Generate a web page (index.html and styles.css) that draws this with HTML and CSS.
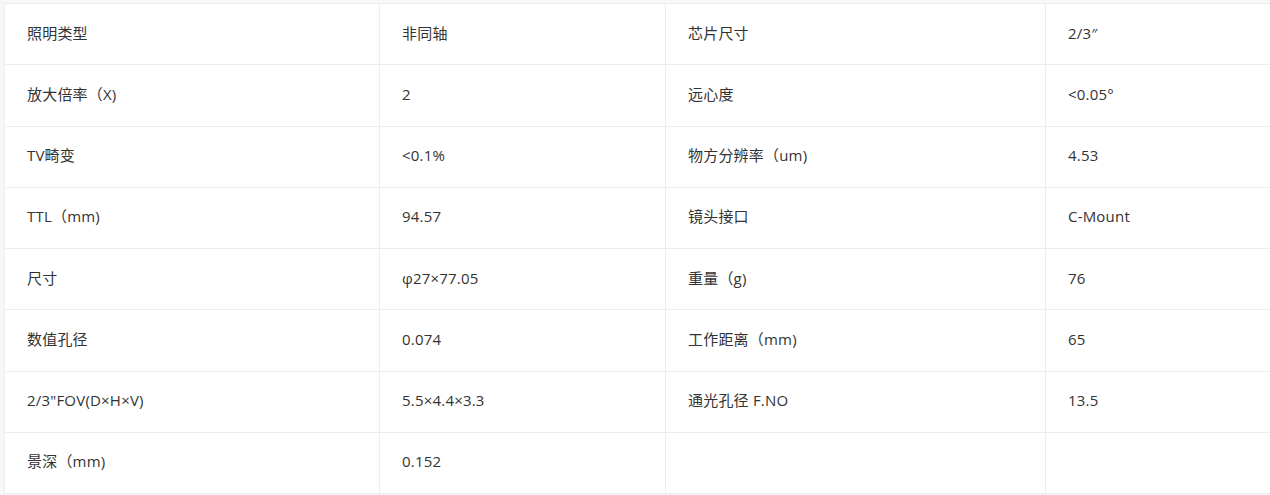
FILE: index.html
```html
<!DOCTYPE html>
<html lang="zh-CN">
<head>
<meta charset="utf-8">
<title>参数</title>
<link rel="stylesheet" href="styles.css">
</head>
<body>
<div class="wrap">
<table class="spec">
<colgroup>
<col class="c1"><col class="c2"><col class="c3"><col class="c4">
</colgroup>
<tbody>
<tr><td>照明类型</td><td>非同轴</td><td>芯片尺寸</td><td>2/3″</td></tr>
<tr><td>放大倍率（X)</td><td>2</td><td>远心度</td><td>&lt;0.05°</td></tr>
<tr><td>TV畸变</td><td>&lt;0.1%</td><td>物方分辨率（um)</td><td>4.53</td></tr>
<tr><td>TTL（mm)</td><td>94.57</td><td>镜头接口</td><td>C-Mount</td></tr>
<tr><td>尺寸</td><td>φ27×77.05</td><td>重量（g)</td><td>76</td></tr>
<tr><td>数值孔径</td><td>0.074</td><td>工作距离（mm)</td><td>65</td></tr>
<tr><td>2/3"FOV(D×H×V)</td><td>5.5×4.4×3.3</td><td>通光孔径 F.NO</td><td>13.5</td></tr>
<tr><td>景深（mm)</td><td>0.152</td><td></td><td></td></tr>
</tbody>
</table>
</div>
</body>
</html>
```
FILE: styles.css
```css
html, body {
  margin: 0;
  padding: 0;
}
body {
  background: #f6f7f9;
  overflow: hidden;
  font-family: "Open Sans", "Noto Sans CJK SC", sans-serif;
  font-size: 15px;
  color: #333333;
}
.wrap {
  padding: 3px 0 0 4px;
}
.spec {
  border-collapse: collapse;
  table-layout: fixed;
  width: 1328px;
  background: #ffffff;
}
.c1 { width: 375px; }
.c2 { width: 286px; }
.c3 { width: 380px; }
.c4 { width: 287px; }
.spec td {
  border: 1px solid #ebedf0;
  height: 61.25px;
  padding: 0 22px 3px;
  box-sizing: border-box;
  vertical-align: middle;
  line-height: 20px;
  letter-spacing: 0.2px;
}
```
